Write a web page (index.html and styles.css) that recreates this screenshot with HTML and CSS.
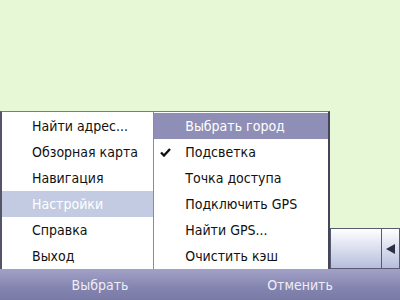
FILE: index.html
```html
<!DOCTYPE html>
<html>
<head>
<meta charset="utf-8">
<link rel="stylesheet" href="styles.css">
</head>
<body>
<div class="screen">
  <div class="canvas"></div>
  <div class="menus">
    <ul class="menu main">
      <li>Найти адрес...</li>
      <li>Обзорная карта</li>
      <li>Навигация</li>
      <li class="sel">Настройки</li>
      <li>Справка</li>
      <li>Выход</li>
    </ul>
    <ul class="menu sub">
      <li class="sel">Выбрать город</li>
      <li><span class="check"><svg width="11" height="9" viewBox="0 0 11 9"><path d="M1 4.5 L4 7.5 L10 1" fill="none" stroke="#111" stroke-width="2.4"/></svg></span>Подсветка</li>
      <li>Точка доступа</li>
      <li>Подключить GPS</li>
      <li>Найти GPS...</li>
      <li>Очистить кэш</li>
    </ul>
    <div class="field">
      <div class="input"></div>
      <div class="arrow"><svg width="9" height="10" viewBox="0 0 9 10"><path d="M9 0 L0 5 L9 10 Z" fill="#2e2e44"/></svg></div>
    </div>
  </div>
  <div class="softkeys">
    <span class="key">Выбрать</span>
    <span class="key">Отменить</span>
  </div>
</div>
</body>
</html>
```
FILE: styles.css
```css
html, body {
  margin: 0;
  padding: 0;
}
body {
  width: 400px;
  height: 300px;
  overflow: hidden;
  font-family: "DejaVu Sans Condensed", "DejaVu Sans", sans-serif;
}
.screen {
  width: 400px;
  height: 300px;
  background: #e6f8d6;
  display: flex;
  flex-direction: column;
}
.canvas {
  flex: 1;
}
.menus {
  display: flex;
  align-items: flex-end;
}
.menu {
  list-style: none;
  margin: 0;
  padding: 0;
  background: #fff;
  font-size: 14px;
  color: #111;
}
.menu li {
  height: 26px;
  line-height: 26px;
  position: relative;
}
.menu li.sel {
  color: #fff;
}
.main {
  width: 152px;
  border-top: 1px solid #7a7a90;
  border-left: 2px solid #55556a;
  border-right: 1px solid #8a8a9a;
  padding-top: 1px;
}
.main li {
  padding-left: 30px;
}
.main li.sel {
  background: #c3cbe2;
}
.sub {
  width: 175px;
  border-top: 1px solid #7a7a90;
  border-right: 2px solid #44445a;
  padding-top: 1px;
}
.sub li {
  padding-left: 31px;
}
.sub li.sel {
  background: #8e8eb6;
}
.check {
  position: absolute;
  left: 6px;
  top: 9px;
  line-height: 0;
}
.field {
  display: flex;
  width: 70px;
  height: 41px;
}
.input {
  flex: 1;
  border: 1px solid #5a5a6e;
  border-right: none;
  background: linear-gradient(#ffffff, #b6bedc);
}
.arrow {
  width: 17px;
  border: 1px solid #5a5a6e;
  background: linear-gradient(#ffffff, #b6bedc);
  display: flex;
  align-items: center;
  justify-content: center;
}
.softkeys {
  height: 31px;
  background: linear-gradient(#a2a2c8, #8484b0 60%, #7a7aa6);
  display: flex;
  align-items: center;
  color: #eeeef6;
  font-size: 14px;
}
.key {
  width: 200px;
  text-align: center;
}
```
